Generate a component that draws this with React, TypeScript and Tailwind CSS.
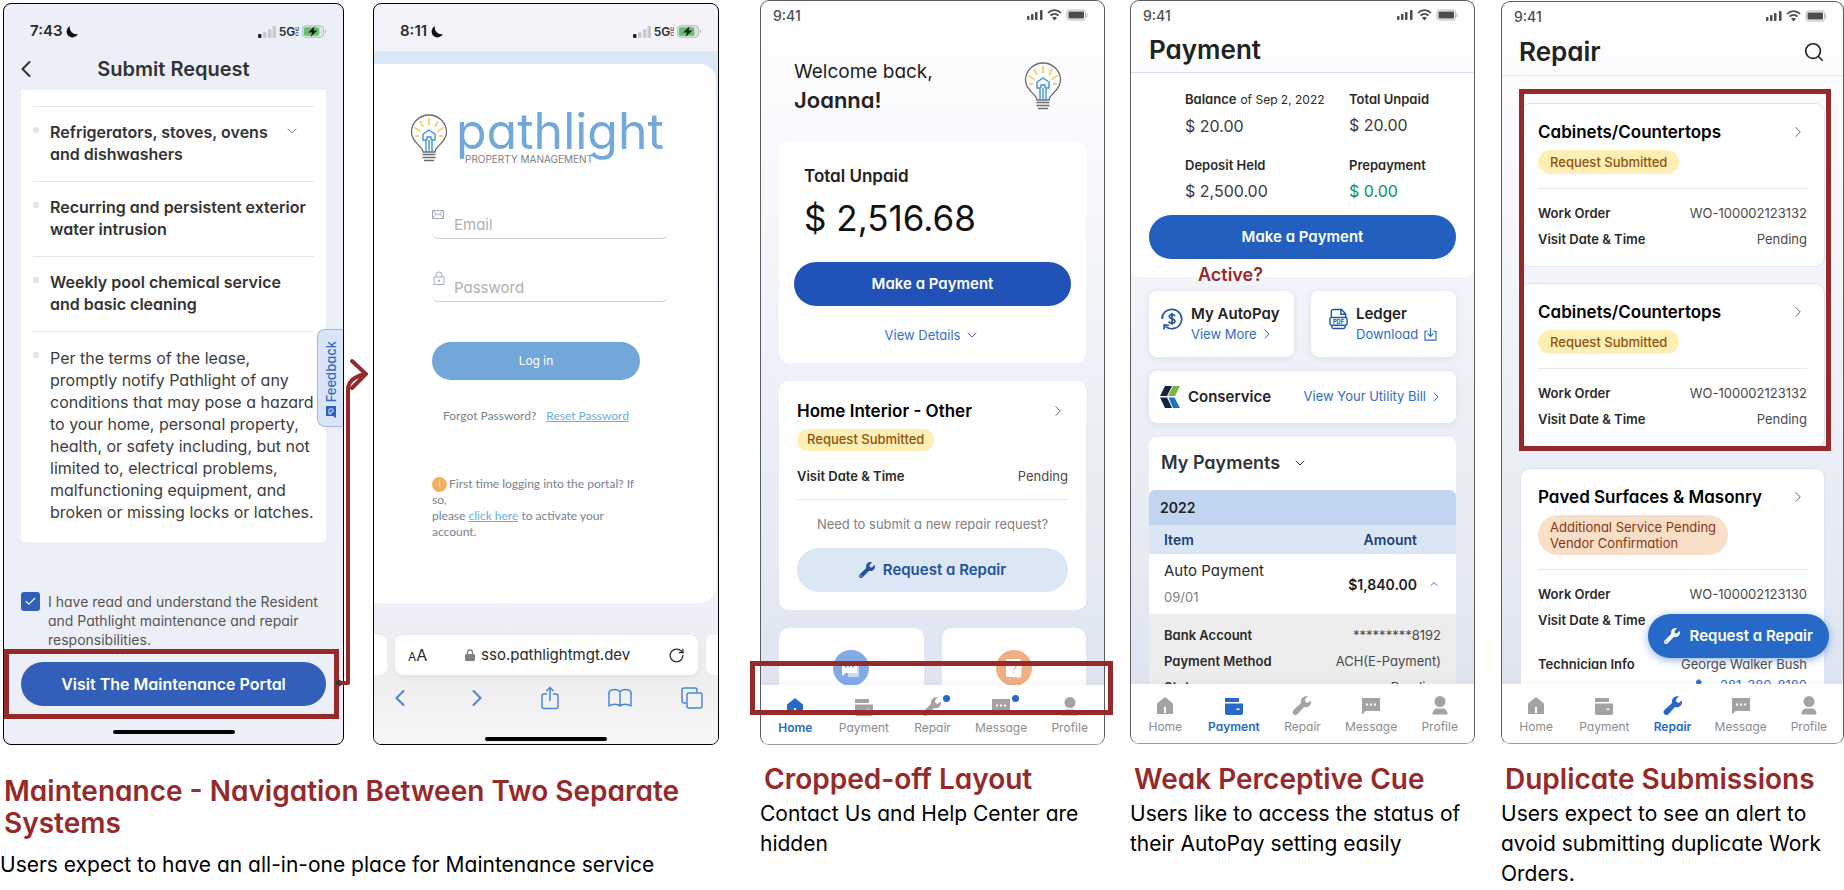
import { ReactNode } from 'react';
import { Check, ChevronDown, ChevronLeft, ChevronRight, ChevronUp, RotateCw, Search } from 'lucide-react';
import { FaWrench } from 'react-icons/fa';

type TabName = 'Home' | 'Payment' | 'Repair' | 'Message' | 'Profile';

const TABS: TabName[] = ['Home', 'Payment', 'Repair', 'Message', 'Profile'];

/* ---------- Icons ---------- */

function BulbIcon({ className }: { className?: string }) {
  return (
    <svg viewBox="0 0 38 50" fill="none" className={className} aria-hidden="true">
      <path
        d="M13 38c0-6-11.500-9-11.500-20a17.500 17 0 0 1 35 0c0 11-11.500 14-11.500 20z"
        stroke="#6b6b6b"
        strokeWidth="1.300"
      />
      <path d="M12.500 40.500h13M12.500 43.500h13M14 46.500h10" stroke="#6b6b6b" strokeWidth="1.400" />
      <path
        d="M19 4v7M10 7l3 6M28 7l-3 6M4.500 13.500l6 4M33.500 13.500l-6 4M5 22h4M33 22h-4"
        stroke="#f7c33c"
        strokeWidth="1.400"
      />
      <path
        d="M16 38V26h-3v-6l6-4 6 4v6h-3v12M19 38V26M17 26v-3h4v3"
        stroke="#3c93d6"
        strokeWidth="1.400"
      />
    </svg>
  );
}

function TabIcon({ name }: { name: TabName }) {
  return (
    <svg viewBox="0 0 20 20" fill="currentColor" className="h-5 w-5" aria-hidden="true">
      {name === 'Home' && <path fillRule="evenodd" d="M10 1l8 6.500V18H2V7.500zM9 11v6h2v-6z" />}
      {name === 'Payment' && (
        <path fillRule="evenodd" d="M1 2h14v4H1zM1 7.500h18V17a2 2 0 0 1-2 2H3a2 2 0 0 1-2-2zM12.500 12.500v1.500h3v-1.500z" />
      )}
      {name === 'Repair' && (
        <path d="M19 4.500l-3.500 2.500-2.500-1.500.5-3L16 .5c-3-1-6.500 1-7 4-.2 1 0 1.700 0 2.500L1.500 14c-1.300 1.300-1.300 3 0 4.200s3 1.100 4.200-.2L12 11c3 .8 7.500-.5 7-6.500z" />
      )}
      {name === 'Message' && (
        <path fillRule="evenodd" d="M1 2h18v13H4.500L1 18.500zM5 7.500v2h2v-2zM9 7.500v2h2v-2zM13 7.500v2h2v-2z" />
      )}
      {name === 'Profile' && (
        <>
          <circle cx="10" cy="5.500" r="5.500" />
          <path d="M2.500 18.500c0-4 2-6 5-6h5c3 0 5 2 5 6z" />
        </>
      )}
    </svg>
  );
}

function AutoPayIcon() {
  return (
    <svg viewBox="0 0 22 22" fill="none" stroke="#2356a5" strokeWidth="1.700" className="h-[22px] w-[22px] shrink-0" aria-hidden="true">
      <path d="M1 10.500A10 9.700 0 0 1 11 1.300a9.700 9.700 0 1 1-6.500 17" />
      <path d="M1.500 6.500V11M3 21.500l.3-4.800 4.700.8" />
      <path d="M13.800 8.200c-.3-1.200-1.400-1.700-2.800-1.700-1.600 0-2.700.8-2.700 2.100 0 3 5.600 1.400 5.600 4.500 0 1.400-1.200 2.200-2.900 2.200s-2.900-.7-3.100-2M11 4.800v12" />
    </svg>
  );
}

function PdfIcon() {
  return (
    <svg viewBox="0 0 20 22" fill="none" stroke="#2356a5" strokeWidth="1.500" className="h-[22px] w-[19px] shrink-0" aria-hidden="true">
      <path d="M2.500 9V3a2 2 0 0 1 2-2H13l4.500 4.500V9M12.500 1.500V6H17" />
      <rect x="1" y="9.500" width="18" height="8" rx="1.500" />
      <path d="M3 18v1.500A1.500 1.500 0 0 0 4.500 21h11a1.500 1.500 0 0 0 1.500-1.500V18" />
      <text x="10" y="16" textAnchor="middle" fontSize="6" fontWeight="700" fill="#2356a5" stroke="none">
        PDF
      </text>
    </svg>
  );
}

function ConserviceLogo() {
  return (
    <svg viewBox="0 0 20 22" className="h-[22px] w-5 shrink-0" aria-hidden="true">
      <path d="M5 0h7L7 10H0z" fill="#14233f" />
      <path d="M13 0h7l-5 10H8z" fill="#76b743" />
      <path d="M0 11.500h7L12 22H5z" fill="#14233f" />
      <path d="M8.500 11.500h6L20 22h-7z" fill="#1b75bc" />
    </svg>
  );
}

function DownloadIcon() {
  return (
    <svg viewBox="0 0 14 14" fill="none" stroke="currentColor" strokeWidth="1.200" className="h-[13px] w-[13px]" aria-hidden="true">
      <path d="M4 3.500H1V13h12V3.500h-3M7 0v9M4 6l3 3 3-3" />
    </svg>
  );
}

/* ---------- Shared pieces ---------- */

// Old style status bar, taken from a live phone
function DeviceStatus({ time }: { time: string }) {
  return (
    <div className="flex h-[47px] items-center justify-between pt-2 pl-[26px] pr-4 text-[#2b2b2b]">
      <div className="flex items-center gap-1 text-[15px] font-semibold">
        {time}
        <svg viewBox="0 0 12 12" className="h-3 w-3" aria-hidden="true">
          <path d="M4 0a6 6 0 1 0 8 8A6.500 6.500 0 0 1 4 0z" fill="#111" />
        </svg>
      </div>
      <div className="flex items-center gap-[3px]">
        <svg viewBox="0 0 18 12" className="h-3 w-[18px]" aria-hidden="true">
          <rect x="0" y="8" width="3.500" height="4" rx="1" fill="#222" />
          <rect x="5" y="6" width="3.500" height="6" rx="1" fill="#c9c9d0" />
          <rect x="10" y="3" width="3.500" height="9" rx="1" fill="#c9c9d0" />
          <rect x="14.500" y="0" width="3.500" height="12" rx="1" fill="#c9c9d0" />
        </svg>
        <span className="flex items-center text-[12px] font-semibold">
          5G
          <span className="flex flex-col text-[5px] leading-[5px]">
            <span>U</span>
            <span>C</span>
          </span>
        </span>
        <svg viewBox="0 0 26 13" className="h-[13px] w-[25px]" aria-hidden="true">
          <rect x=".5" y=".5" width="22" height="12" rx="3.500" fill="#dfe3e6" stroke="#b5b8bd" />
          <rect x="2" y="2" width="16" height="9" rx="2" fill="#5fc466" />
          <path d="M24 4.500c1.500.5 1.500 3.500 0 4z" fill="#b5b8bd" />
          <path d="M13 1L6.500 7.500h4L9 12l7-6.500h-4z" fill="#111" />
        </svg>
      </div>
    </div>
  );
}

function StatusBar() {
  return (
    <div className="flex h-7 items-center justify-between pl-3 pr-4 text-[#4d4d4d]">
      <span className="text-[14px] font-medium">9:41</span>
      <svg viewBox="0 0 61 12" className="h-3 w-[61px]" fill="currentColor" aria-hidden="true">
        <rect x="0" y="7" width="2.500" height="4" rx=".8" />
        <rect x="4" y="5" width="2.500" height="6" rx=".8" />
        <rect x="8" y="3" width="2.500" height="8" rx=".8" />
        <rect x="13" y="1" width="2.500" height="10" rx=".8" />
        <path d="M21 4a9 9 0 0 1 13 0M23.500 6.500a6 6 0 0 1 8 0" fill="none" stroke="currentColor" strokeWidth="1.800" />
        <path d="M25 8.800a4 4 0 0 1 5 0L27.500 11.500z" />
        <rect x="40" y="1" width="18.500" height="10" rx="2.500" fill="none" stroke="#b5b5b5" />
        <rect x="41.500" y="2.500" width="15.500" height="7" rx="1" />
        <path d="M60 4.500v3.500" stroke="#b5b5b5" />
      </svg>
    </div>
  );
}

function TabBar({ active, badges = [] }: { active: TabName; badges?: TabName[] }) {
  return (
    <nav className="relative flex h-[59px] shrink-0 bg-white pt-3 shadow-[0_-2px_6px_rgba(80,100,140,0.06)]">
      {TABS.map((tab) => (
        <a
          key={tab}
          href={`#${tab.toLowerCase()}`}
          className={`flex flex-1 flex-col items-center gap-[3px] text-[12px] leading-4 ${
            tab === active ? 'font-semibold text-[#2669c8]' : 'text-[#8c8c8c]'
          }`}
        >
          <span className={tab === active ? 'relative' : 'relative text-[#a3a3a3]'}>
            <TabIcon name={tab} />
            {badges.includes(tab) && (
              <span className="absolute -top-[2px] -right-2 h-[7px] w-[7px] rounded-full bg-[#2669c8]" />
            )}
          </span>
          {tab}
        </a>
      ))}
    </nav>
  );
}

function Phone({ children, className = '' }: { children: ReactNode; className?: string }) {
  return (
    <div
      className={`flex flex-col overflow-hidden rounded-[9px] border border-[#5c5c5c] border-b-[#9a9a9a] bg-linear-to-b from-white via-[#eef1f8] to-[#dce3ef] ${className}`}
    >
      {children}
    </div>
  );
}

function Caption({ title, children }: { title: string; children: ReactNode }) {
  return (
    <div>
      <h2 className="pl-1 text-[28px] leading-9 font-semibold whitespace-nowrap text-[#962a2b]">{title}</h2>
      <p className="mt-[2px] text-[21px] leading-[30px] text-black">{children}</p>
    </div>
  );
}

function DetailRow({ label, value }: { label: string; value: string }) {
  return (
    <div className="flex justify-between text-[13px] leading-[26px]">
      <dt className="font-semibold text-[#2a2a2a]">{label}</dt>
      <dd className="text-[#4a4a4a]">{value}</dd>
    </div>
  );
}

/* ---------- Screens ---------- */

const RESPONSIBILITIES = [
  { lines: ['Refrigerators, stoves, ovens', 'and dishwashers'], expandable: true },
  { lines: ['Recurring and persistent exterior', 'water intrusion'] },
  { lines: ['Weekly pool chemical service', 'and basic cleaning'] },
];

const LEASE_TERMS = [
  'Per the terms of the lease,',
  'promptly notify Pathlight of any',
  'conditions that may pose a hazard',
  'to your home, personal property,',
  'health, or safety including, but not',
  'limited to, electrical problems,',
  'malfunctioning equipment, and',
  'broken or missing locks or latches.',
];

function Bullet() {
  return <span className="absolute top-5 left-0 h-[6px] w-[6px] rounded-full bg-[#e3e3e3]" />;
}

function SubmitRequestScreen() {
  return (
    <div className="relative flex h-[742px] flex-col overflow-hidden rounded-lg border border-black bg-[#edeff8]">
      <DeviceStatus time="7:43" />
      <header className="relative flex h-[39px] items-center justify-center pb-1">
        <button aria-label="Back" className="absolute left-2 text-[#333]">
          <ChevronLeft className="h-7 w-7" strokeWidth={1.8} />
        </button>
        <h1 className="text-[20px] leading-7 font-semibold text-[#333]">Submit Request</h1>
      </header>
      <div className="mx-[17px] rounded-b bg-white px-3 pt-4 pb-[19px]">
        <ul className="text-[16px] leading-[22px] whitespace-nowrap text-[#3d3d3d]">
          {RESPONSIBILITIES.map((item) => (
            <li key={item.lines[0]} className="relative border-t border-[#e3e5ee] pt-[14px] pb-4 pl-[17px] font-semibold text-[#333]">
              <Bullet />
              {item.lines.map((line) => (
                <div key={line}>{line}</div>
              ))}
              {item.expandable && <ChevronDown className="absolute top-4 right-[14px] h-4 w-4 text-[#888]" strokeWidth={1.5} />}
            </li>
          ))}
          <li className="relative border-t border-[#e3e5ee] pt-[15px] pl-[17px]">
            <Bullet />
            {LEASE_TERMS.map((line) => (
              <div key={line}>{line}</div>
            ))}
          </li>
        </ul>
      </div>
      <button className="absolute top-[325px] right-0 flex h-[98px] w-[26px] flex-col items-center justify-end gap-1 rounded-l-lg border border-r-0 border-[#9dbbe4] bg-[#d9e5f6] pb-2 text-[#3668bd]">
        <span className="rotate-180 text-[13px] leading-4 font-medium [writing-mode:vertical-rl]">Feedback</span>
        <svg viewBox="0 0 12 12" className="h-3 w-3" aria-hidden="true">
          <path d="M1 0h10v12l-3-2H1z" fill="#2f5fb8" />
          <path d="M4 3h4v3H6v2H4z" fill="none" stroke="#d9e5f6" />
        </svg>
      </button>
      <div className="mt-auto px-[17px]">
        <div className="flex gap-2">
          <span className="relative h-[19px] w-[19px] shrink-0">
            <input
              id="understand"
              type="checkbox"
              defaultChecked
              className="block h-[19px] w-[19px] appearance-none rounded-[3px] bg-[#315fba]"
            />
            <Check className="pointer-events-none absolute top-[3px] left-[3px] h-[13px] w-[13px] text-white" strokeWidth={2} />
          </span>
          <label htmlFor="understand" className="text-[14px] leading-[19px] whitespace-nowrap text-[#555]">
            I have read and understand the Resident
            <br />
            and Pathlight maintenance and repair
            <br />
            responsibilities.
          </label>
        </div>
        <div className="relative mt-[13px]">
          <button className="block h-11 w-full rounded-full bg-[#315fba] text-[16px] font-semibold text-white">
            Visit The Maintenance Portal
          </button>
          <span className="pointer-events-none absolute -top-[13px] -right-[13px] -bottom-[13px] -left-[17px] border-[5px] border-[#962a2b]" />
        </div>
      </div>
      <div className="mx-auto mt-6 mb-[10px] h-1 w-[122px] rounded-full bg-black" />
    </div>
  );
}

function LoginScreen() {
  return (
    <div className="flex h-[742px] flex-col overflow-hidden rounded-lg border border-black bg-[#f4f3fa]">
      <DeviceStatus time="8:11" />
      <div className="bg-linear-to-b from-[#d9e7f6] to-[#eeeff8] pt-[13px] pr-[2px]">
        <div className="h-[539px] rounded-r-2xl bg-white px-9 pt-12">
          <div className="flex h-[52px] gap-2">
            <BulbIcon className="mt-[2px] h-[50px] w-[38px]" />
            <div className="relative">
              <div className="-mt-[6px] text-[50px] leading-[50px] text-[#73a9da]">pathlight</div>
              <div className="absolute top-[41px] left-[9px] text-[10px] leading-3 whitespace-nowrap text-[#808080]">
                PROPERTY MANAGEMENT
              </div>
            </div>
          </div>
          <form className="px-[22px] pt-[38px] text-[15px]" onSubmit={(e) => e.preventDefault()}>
            <div className="relative mr-[-10px] rounded-b-md border-b border-[#cfcfcf]">
              <label htmlFor="email" className="absolute top-2 left-0">
                <svg viewBox="0 0 12 9" fill="none" stroke="#a3adb8" className="h-[9px] w-3" role="img" aria-label="Email">
                  <path d="M.5.5h11v8H.5zM.5.500L6 5l5.500-4.500M.5 8.500L4 4M11.500 8.500L8 4" />
                </svg>
              </label>
              <input id="email" type="email" placeholder="Email" className="h-9 w-full bg-transparent pt-2 pl-[22px] outline-none placeholder:text-[#b0b0b0]" />
            </div>
            <div className="relative mt-[26px] mr-[-10px] rounded-b-md border-b border-[#cfcfcf]">
              <label htmlFor="password" className="absolute top-[6px] left-[1px]">
                <svg viewBox="0 0 12 14" fill="none" stroke="#a3adb8" className="h-[14px] w-3" role="img" aria-label="Password">
                  <path d="M1 6h10v7.500H1zM3 6V4a3 3 0 0 1 6 0v2M6 8.500v3M5 9.500h2" />
                </svg>
              </label>
              <input id="password" type="password" placeholder="Password" className="h-9 w-full bg-transparent pt-2 pl-[22px] outline-none placeholder:text-[#b0b0b0]" />
            </div>
            <button className="mt-10 block h-[38px] w-[208px] rounded-full bg-[#73a7da] text-[12px] text-white">Log in</button>
          </form>
          <div className="pt-[26px] pl-[33px] text-[12px] leading-5 text-[#76828e] [font-family:Lato,sans-serif]">
            Forgot Password?
            <a href="#reset" className="ml-[10px] text-[#6aaedd] underline">Reset Password</a>
          </div>
          <div className="mt-[50px] pl-[22px] text-[12px] leading-4 text-[#76828e] [font-family:Lato,sans-serif]">
            <div className="flex items-center gap-[2px]">
              <span className="flex h-[15px] w-[15px] items-center justify-center rounded-full bg-[#f0b062] text-[9px] text-[#fbe3c0]">
                i
              </span>
              First time logging into the portal? If
            </div>
            so,
            <br />
            please <a href="#activate" className="text-[#6aaedd] underline">click here</a> to activate your
            <br />
            account.
          </div>
        </div>
      </div>
      <div className="flex flex-1 flex-col bg-linear-to-b from-[#eeeff8] via-[#eeeeef] to-[#f7f7f8] pt-8">
        <div className="flex h-10 gap-2">
          <div className="w-[13px] rounded-r-lg bg-white" />
          <div className="flex flex-1 items-center justify-between rounded-lg bg-white px-[13px] text-[#2b2b2b] shadow-[0_2px_6px_rgba(0,0,0,0.06)]">
            <span className="flex items-baseline">
              <span className="text-[12px]">A</span>
              <span className="text-[16px]">A</span>
            </span>
            <span className="flex items-center gap-[6px] text-[15px]">
              <svg viewBox="0 0 10 12" className="h-3 w-[10px]" aria-hidden="true">
                <rect y="5" width="10" height="7" rx="1.500" fill="#808080" />
                <path d="M2.500 5V3.500a2.500 2.500 0 0 1 5 0V5" fill="none" stroke="#808080" strokeWidth="1.300" />
              </svg>
              sso.pathlightmgt.dev
            </span>
            <button aria-label="Reload">
              <RotateCw className="h-[17px] w-[17px]" strokeWidth={1.8} />
            </button>
          </div>
          <div className="w-[12px] rounded-l-lg bg-white" />
        </div>
        <div className="flex items-center justify-between pt-[9px] pr-[15px] pl-3 text-[#4a86d8]">
          <button aria-label="Previous page"><ChevronLeft className="h-7 w-7" strokeWidth={1.8} /></button>
          <button aria-label="Next page"><ChevronRight className="h-7 w-7" strokeWidth={1.8} /></button>
          <button aria-label="Share">
            <svg viewBox="0 0 18 24" fill="none" stroke="currentColor" strokeWidth="1.500" className="h-6 w-[18px]" aria-hidden="true">
              <path d="M6 8H3a2 2 0 0 0-2 2v10.500a2 2 0 0 0 2 2h12a2 2 0 0 0 2-2V10a2 2 0 0 0-2-2h-3M9 15V1.500M5.500 5L9 1.500 12.500 5" />
            </svg>
          </button>
          <button aria-label="Bookmarks">
            <svg viewBox="0 0 24 20" fill="none" stroke="currentColor" strokeWidth="1.500" className="h-5 w-6" aria-hidden="true">
              <path d="M12 18c-2-2.500-8-2.500-11 0V4c2-3.500 9-3.500 11 0 2-3.500 9-3.500 11 0v14c-3-2.500-9-2.500-11 0V4" strokeLinejoin="round" />
            </svg>
          </button>
          <button aria-label="Tabs">
            <svg viewBox="0 0 22 22" fill="none" stroke="currentColor" strokeWidth="1.500" className="h-[22px] w-[22px]" aria-hidden="true">
              <path d="M5.500 16H3a2 2 0 0 1-2-2V3a2 2 0 0 1 2-2h11a2 2 0 0 1 2 2v2.500" />
              <rect x="6" y="6" width="15" height="15" rx="2" />
            </svg>
          </button>
        </div>
        <div className="mx-auto mt-auto mb-[3px] h-1 w-[122px] rounded-full bg-black" />
      </div>
    </div>
  );
}

function HomeScreen() {
  return (
    <div className="relative">
      <Phone className="h-[745px]">
        <StatusBar />
        <div className="min-h-0 flex-1 overflow-hidden px-[18px]">
          <header className="flex items-start justify-between pt-[29px] pr-6 pb-7 pl-[15px] text-[#222]">
            <div className="leading-7">
              <p className="text-[19px] leading-7">Welcome back,</p>
              <p className="text-[22px] leading-7 font-semibold">Joanna!</p>
            </div>
            <BulbIcon className="mt-1 h-[50px] w-[38px]" />
          </header>
          <section className="rounded-[10px] bg-white px-[15px] pt-[22px] pb-[18px]">
            <h2 className="pl-[10px] text-[17px] leading-6 font-semibold text-[#222]">Total Unpaid</h2>
            <p className="mt-[10px] pl-[10px] text-[35px] leading-10 text-[#111]">$ 2,516.68</p>
            <button className="mt-6 h-11 w-full rounded-full bg-[#2052b7] text-[15px] font-semibold text-white">Make a Payment</button>
            <button className="mx-auto mt-[19px] flex items-center gap-1 text-[13px] leading-5 text-[#3571cf]">
              View Details <ChevronDown className="h-4 w-4" strokeWidth={1.5} />
            </button>
          </section>
          <section className="mt-[18px] rounded-[10px] bg-white px-[18px] py-[18px]">
            <div className="flex items-center justify-between pr-[1px]">
              <h2 className="text-[17px] leading-6 font-semibold text-black">Home Interior - Other</h2>
              <ChevronRight className="h-[18px] w-[18px] text-[#666]" strokeWidth={1.3} />
            </div>
            <span className="mt-[6px] flex h-[22px] w-fit items-center rounded-full bg-[#ffefb5] px-[10px] text-[13px] font-medium text-[#8f530c]">
              Request Submitted
            </span>
            <dl className="mt-3">
              <DetailRow label="Visit Date & Time" value="Pending" />
            </dl>
            <p className="mt-[10px] border-t border-[#e6e6e6] pt-[14px] text-center text-[13px] leading-5 text-[#808080]">
              Need to submit a new repair request?
            </p>
            <button className="mt-[14px] flex h-11 w-full items-center justify-center gap-2 rounded-full bg-[#dbe7f5] text-[15px] font-semibold text-[#235299]">
              <FaWrench className="h-4 w-4" />
              Request a Repair
            </button>
          </section>
          <div className="mt-[18px] grid grid-cols-2 gap-[18px]">
            <a href="#contact" aria-label="Contact Us" className="flex h-28 justify-center rounded-[10px] bg-white pt-[22px]">
              <svg viewBox="0 0 36 36" className="h-9 w-9" aria-hidden="true">
                <circle cx="18" cy="18" r="18" fill="#80abe8" />
                <path d="M15 16h11v11H15z" fill="#c5daf6" />
                <path d="M9 11h15v12H13l-4 3z" fill="#fff" />
                <path d="M12 16.500h2M15.500 16.500h2M19 16.500h2" stroke="#80abe8" strokeWidth="2" />
              </svg>
            </a>
            <a href="#help" aria-label="Help Center" className="flex h-28 justify-center rounded-[10px] bg-white pt-[22px]">
              <svg viewBox="0 0 36 36" className="h-9 w-9" aria-hidden="true">
                <circle cx="18" cy="18" r="18" fill="#f2ae82" />
                <path d="M20 11l7 1-2 16-8-1z" fill="#fbdcc6" />
                <rect x="10" y="9" width="15" height="18" rx="1.500" fill="#fff" />
                <path d="M15.500 16.500c0-3 4.500-3 4.500-.3 0 2-2.200 1.600-2.200 3.800M17.800 21.500v1.500" fill="none" stroke="#f2ae82" strokeWidth="1.300" />
              </svg>
            </a>
          </div>
        </div>
        <TabBar active="Home" badges={['Repair', 'Message']} />
      </Phone>
      <span className="pointer-events-none absolute top-[661px] -right-2 -left-[10px] h-[54px] border-[5px] border-[#962a2b]" />
    </div>
  );
}

const BALANCES = [
  { label: 'Balance', note: 'of Sep 2, 2022', value: '$ 20.00' },
  { label: 'Total Unpaid', value: '$ 20.00' },
  { label: 'Deposit Held', value: '$ 2,500.00' },
  { label: 'Prepayment', value: '$ 0.00', positive: true },
];

const CARD_SHADOW = 'rounded-lg bg-white shadow-[0_1px_6px_rgba(90,110,150,0.15)]';

function PaymentScreen() {
  return (
    <Phone className="h-[744px]">
      <StatusBar />
      <h1 className="border-b border-[#d5dfeb] pt-[3px] pb-1 pl-[18px] text-[26px] leading-9 font-semibold text-[#222]">Payment</h1>
      <div className="min-h-0 flex-1 overflow-hidden">
        <section className="relative rounded-b-[10px] bg-white px-[18px] pt-4 pb-[18px]">
          <dl className="grid grid-cols-[164fr_107fr] gap-y-[17px] pl-9">
            {BALANCES.map((b) => (
              <div key={b.label}>
                <dt className="text-[13px] leading-5 font-semibold whitespace-nowrap text-[#2a2a2a]">
                  {b.label}
                  {b.note && <span className="ml-1 text-[12px] font-normal">{b.note}</span>}
                </dt>
                <dd className={`mt-1 text-[16px] leading-6 ${b.positive ? 'text-[#0d9060]' : 'text-[#3a3a3a]'}`}>{b.value}</dd>
              </div>
            ))}
          </dl>
          <button className="mt-3 h-11 w-full rounded-full bg-[#235fbf] text-[15px] font-semibold text-white">Make a Payment</button>
          <span className="absolute -bottom-[10px] left-[67px] text-[18px] leading-6 font-semibold text-[#962a2b]">Active?</span>
        </section>
        <div className="px-[18px] pt-[14px]">
          <div className="grid grid-cols-2 gap-[17px]">
            <div className={`flex gap-2 py-[13px] pr-2 pl-3 ${CARD_SHADOW}`}>
              <span className="pt-1"><AutoPayIcon /></span>
              <div className="leading-5 whitespace-nowrap">
                <h2 className="text-[15px] leading-5 font-semibold text-[#222]">My AutoPay</h2>
                <a href="#autopay" className="flex items-center text-[13px] leading-5 text-[#2f6bc9]">
                  View More <ChevronRight className="ml-[2px] h-4 w-4" strokeWidth={1.5} />
                </a>
              </div>
            </div>
            <div className={`flex gap-2 py-[13px] pr-2 pl-[18px] ${CARD_SHADOW}`}>
              <span className="pt-1"><PdfIcon /></span>
              <div className="leading-5 whitespace-nowrap">
                <h2 className="text-[15px] leading-5 font-semibold text-[#222]">Ledger</h2>
                <a href="#ledger" className="flex items-center gap-[6px] text-[13px] leading-5 text-[#2f6bc9]">
                  Download <DownloadIcon />
                </a>
              </div>
            </div>
          </div>
          <div className={`mt-[14px] flex h-[52px] items-center gap-2 pr-3 pl-[11px] ${CARD_SHADOW}`}>
            <ConserviceLogo />
            <h2 className="text-[15px] font-semibold text-[#222]">Conservice</h2>
            <a href="#utility" className="ml-auto flex items-center text-[13px] text-[#2f6bc9]">
              View Your Utility Bill <ChevronRight className="ml-[2px] h-4 w-4" strokeWidth={1.5} />
            </a>
          </div>
          <section className="mt-[14px] rounded-lg bg-white pt-3">
            <h2 className="flex items-center gap-3 pl-3 text-[18px] leading-7 font-semibold text-[#333]">
              My Payments <ChevronDown className="h-4 w-4" strokeWidth={1.5} />
            </h2>
            <table className="mt-[13px] w-full text-left">
              <caption className="h-[35px] rounded-t-md bg-[#c1d4f0] pl-[11px] text-left text-[14px] leading-[35px] font-semibold text-[#222]">
                2022
              </caption>
              <thead>
                <tr className="h-[29px] bg-[#dbe6f5] text-[14px] text-[#1c3f7a]">
                  <th className="pl-[15px] font-semibold">Item</th>
                  <th className="pr-[39px] text-right font-semibold">Amount</th>
                </tr>
              </thead>
              <tbody>
                <tr className="h-[60px]">
                  <td className="pl-[15px] text-[15px] leading-[26px] text-[#2a2a2a]">
                    Auto Payment
                    <div className="text-[13px] leading-[26px] text-[#808080]">09/01</div>
                  </td>
                  <td className="pr-4 text-[14px] font-semibold text-[#1c1c1c]">
                    <div className="flex items-center justify-end gap-[11px]">
                      $1,840.00
                      <ChevronUp className="h-3 w-3 text-[#2f6bc9]" strokeWidth={2} />
                    </div>
                  </td>
                </tr>
              </tbody>
            </table>
            <dl className="bg-[#ededed] pt-2 pr-[15px] pl-[15px]">
              <DetailRow label="Bank Account" value="*********8192" />
              <DetailRow label="Payment Method" value="ACH(E-Payment)" />
              <DetailRow label="Status" value="Pending" />
            </dl>
          </section>
        </div>
      </div>
      <TabBar active="Payment" />
    </Phone>
  );
}

interface WorkOrderProps {
  title: string;
  status: string[];
  order: string;
  urgent?: boolean;
  className: string;
  children?: ReactNode;
}

function WorkOrderCard({ title, status, order, urgent, className, children }: WorkOrderProps) {
  return (
    <article className={`rounded-[10px] border border-[#dbe5f5] bg-white px-[17px] pt-4 pb-[14px] ${className}`}>
      <div className="flex items-center justify-between">
        <h2 className="text-[17px] leading-6 font-semibold whitespace-nowrap text-black">{title}</h2>
        <ChevronRight className="h-[18px] w-[18px] text-[#666]" strokeWidth={1.3} />
      </div>
      <div
        className={`mt-[6px] w-fit px-3 py-1 text-[13px] leading-4 ${
          urgent ? 'rounded-[20px] bg-[#f9dfc7] text-[#8a3413]' : 'rounded-full bg-[#ffefb5] font-medium text-[#8f530c]'
        }`}
      >
        {status.map((line) => (
          <div key={line}>{line}</div>
        ))}
      </div>
      <dl className="mt-[14px] border-t border-[#e3e8f2] pt-[11px]">
        <DetailRow label="Work Order" value={order} />
        <DetailRow label="Visit Date & Time" value="Pending" />
        {children}
      </dl>
    </article>
  );
}

function RepairScreen() {
  return (
    <div className="relative mt-px">
      <Phone className="h-[743px]">
        <StatusBar />
        <header className="flex items-center justify-between border-b border-[#dbe5f5] pt-1 pr-[18px] pb-[5px] pl-[17px] text-[#222]">
          <h1 className="text-[26px] leading-9 font-semibold">Repair</h1>
          <button aria-label="Search">
            <Search className="h-[22px] w-[22px]" strokeWidth={1.8} />
          </button>
        </header>
        <div className="min-h-0 flex-1 overflow-hidden px-[18px]">
          <WorkOrderCard className="mt-[27px]" title="Cabinets/Countertops" status={['Request Submitted']} order="WO-100002123132" />
          <WorkOrderCard className="mt-4" title="Cabinets/Countertops" status={['Request Submitted']} order="WO-100002123132" />
          <WorkOrderCard
            className="mt-[21px]"
            title="Paved Surfaces & Masonry"
            status={['Additional Service Pending', 'Vendor Confirmation']}
            order="WO-100002123130"
            urgent
          >
            <div className="mt-[18px]">
              <DetailRow label="Technician Info" value="George Walker Bush" />
            </div>
            <a href="tel:2813808180" className="flex items-center justify-end gap-3 text-[13px] leading-4 text-[#2f6bc9]">
              <svg viewBox="0 0 12 12" fill="currentColor" className="h-3 w-3" aria-hidden="true">
                <path d="M3 0l3 3-1.500 2L7 7.500 9 6l3 3-2 3C5 12 0 7 0 2z" />
              </svg>
              281-380-8180
            </a>
          </WorkOrderCard>
        </div>
        <TabBar active="Repair" />
      </Phone>
      <span className="pointer-events-none absolute top-[88px] right-[13px] left-[18px] h-[362px] border-[5px] border-[#962a2b]" />
      <button className="absolute right-[15px] bottom-[86px] flex h-11 items-center gap-[10px] rounded-full bg-[#2669c8] px-4 text-[15px] font-semibold whitespace-nowrap text-white shadow-[0_2px_8px_rgba(38,105,200,0.5)]">
        <FaWrench className="h-4 w-4" />
        Request a Repair
      </button>
    </div>
  );
}

/* ---------- Page ---------- */

export default function App() {
  return (
    <main className="grid grid-cols-[760fr_370fr_371fr_343fr] bg-white [font-family:Inter,'Noto_Sans',sans-serif] [font-feature-settings:'cv11']">
      <section className="min-w-0 pt-[3px] pr-[41px]">
        <div className="grid grid-cols-[341fr_29px_346fr] pl-[3px]">
          <SubmitRequestScreen />
          <div className="relative">
            <svg viewBox="0 0 32 340" fill="none" className="absolute top-[350px] -left-2 h-[340px] w-8" aria-hidden="true">
              <circle cx="3" cy="330" r="3" fill="#333" />
              <path d="M4 330H12V37C12 28 18 24 29 21" stroke="#962a2b" strokeWidth="4" strokeLinejoin="round" />
              <path d="M16 8L30 21L16 35" stroke="#962a2b" strokeWidth="4" strokeLinecap="round" />
            </svg>
          </div>
          <LoginScreen />
        </div>
        <h2 className="pt-[30px] pl-1 text-[28px] leading-8 font-semibold text-[#962a2b]">
          Maintenance - Navigation Between Two Separate Systems
        </h2>
        <p className="mt-[11px] text-[21px] leading-[30px] text-black">
          Users expect to have an all-in-one place for Maintenance service
        </p>
      </section>
      <section className="flex min-w-0 flex-col gap-4 pr-[25px]">
        <HomeScreen />
        <Caption title="Cropped-off Layout">Contact Us and Help Center are hidden</Caption>
      </section>
      <section className="flex min-w-0 flex-col gap-[17px] pr-[26px]">
        <PaymentScreen />
        <Caption title="Weak Perceptive Cue">Users like to access the status of their AutoPay setting easily</Caption>
      </section>
      <section className="flex min-w-0 flex-col gap-[17px]">
        <RepairScreen />
        <Caption title="Duplicate Submissions">Users expect to see an alert to avoid submitting duplicate Work Orders.</Caption>
      </section>
    </main>
  );
}
